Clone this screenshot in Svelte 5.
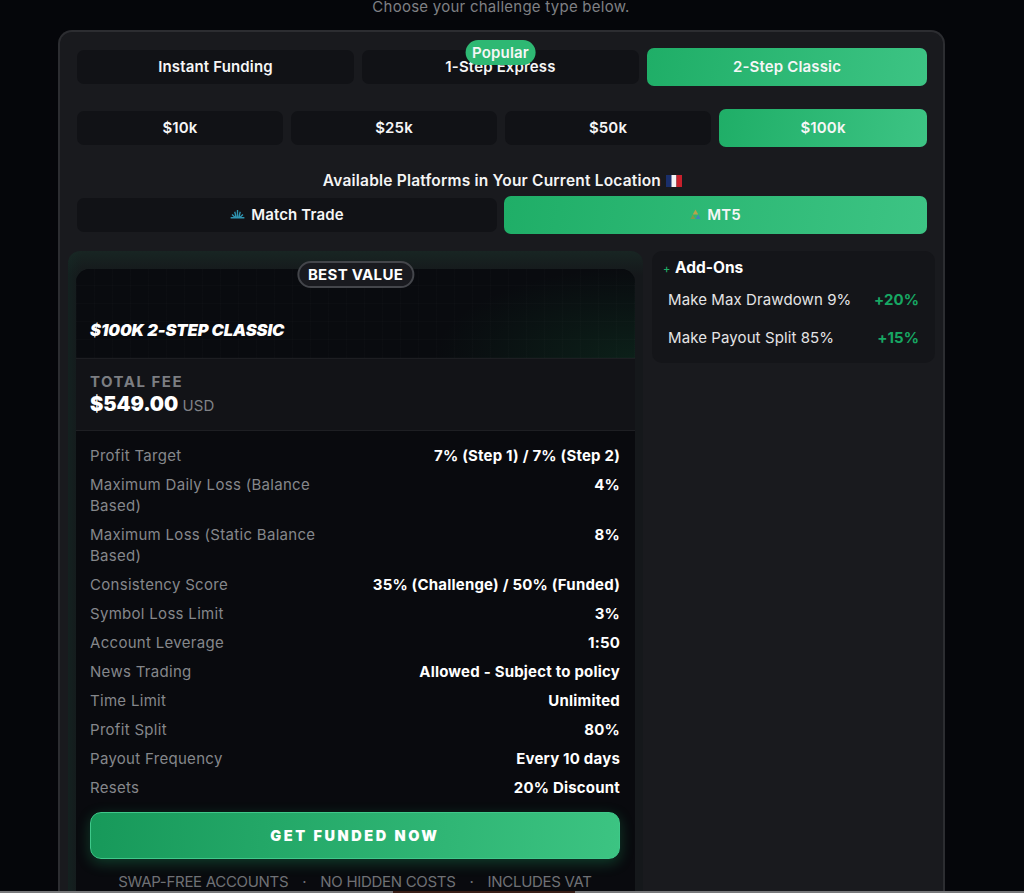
<script>
  let challenges = [
    { label: 'Instant Funding' },
    { label: '1-Step Express', popular: true },
    { label: '2-Step Classic', active: true }
  ];
  let sizes = [
    { label: '$10k' },
    { label: '$25k' },
    { label: '$50k' },
    { label: '$100k', active: true }
  ];
  let rules = [
    ['Profit Target', '7% (Step 1) / 7% (Step 2)'],
    ['Maximum Daily Loss (Balance Based)', '4%'],
    ['Maximum Loss (Static Balance Based)', '8%'],
    ['Consistency Score', '35% (Challenge) / 50% (Funded)'],
    ['Symbol Loss Limit', '3%'],
    ['Account Leverage', '1:50'],
    ['News Trading', 'Allowed - Subject to policy'],
    ['Time Limit', 'Unlimited'],
    ['Profit Split', '80%'],
    ['Payout Frequency', 'Every 10 days'],
    ['Resets', '20% Discount']
  ];
  let addons = [
    ['Make Max Drawdown 9%', '+20%'],
    ['Make Payout Split 85%', '+15%']
  ];
</script>

<div class="page">
  <div class="content">
    <p class="intro">Choose your challenge type below.</p>

    <section class="panel">
      <div class="row three">
        {#each challenges as c}
          <button class="opt" class:active={c.active}>
            {#if c.popular}<span class="popular">Popular</span>{/if}
            {c.label}
          </button>
        {/each}
      </div>

      <div class="row four">
        {#each sizes as s}
          <button class="opt" class:active={s.active}>{s.label}</button>
        {/each}
      </div>

      <div class="platforms">
        <h3>Available Platforms in Your Current Location
          <svg class="flag" viewBox="0 0 16 12" width="16" height="12">
            <rect width="6" height="12" fill="#1a2f6b" />
            <rect x="5.5" width="5" height="12" fill="#f3f3f5" />
            <rect x="10.5" width="5.500" height="12" fill="#c8202c" />
          </svg>
        </h3>
        <div class="row two">
          <button class="opt">
            <svg class="logo" viewBox="0 0 16 12" width="15" height="11">
              <path d="M8 1v8M5 3l1.500 6M11 3L9.500 9M2 6l4 3.500M14 6l-4 3.500M0.500 9.500h15" stroke="#2f93b0" stroke-width="1.500" fill="none" />
            </svg>
            Match Trade
          </button>
          <button class="opt active">
            <svg class="logo" viewBox="0 0 12 12" width="11" height="11">
              <path d="M6 0.500 9 6H3z" fill="#b9a24a" />
              <path d="M3 6 0.500 11H6z" fill="#7f9a4c" />
              <path d="M9 6l2.500 5H6z" fill="#3f86b8" />
            </svg>
            MT5
          </button>
        </div>
      </div>

      <div class="columns">
        <div class="left">
          <article class="card">
            <span class="best">BEST VALUE</span>
            <header class="card-head">
              <h2>$100K 2-STEP CLASSIC</h2>
            </header>
            <div class="fee">
              <div class="fee-label">TOTAL FEE</div>
              <div class="fee-price"><strong>$549.00</strong> <span>USD</span></div>
            </div>
            <div class="rules">
              {#each rules as [name, value]}
                <div class="rule">
                  <span class="rule-name">{name}</span>
                  <span class="rule-value">{value}</span>
                </div>
              {/each}
              <button class="cta">GET FUNDED NOW</button>
              <div class="perks">
                <span>SWAP-FREE ACCOUNTS</span><i>·</i><span>NO HIDDEN COSTS</span><i>·</i><span>INCLUDES VAT</span>
              </div>
            </div>
          </article>
        </div>

        <aside class="addons">
          <h4><span class="plus">+</span> Add-Ons</h4>
          {#each addons as [name, price]}
            <div class="addon">
              <span>{name}</span>
              <b>{price}</b>
            </div>
          {/each}
        </aside>
      </div>
    </section>
  </div>
  <div class="strip"><span></span></div>
</div>

<style>
  :global(body) {
    margin: 0;
    background: #05060a;
  }

  .page {
    height: 893px;
    overflow: hidden;
    font-family: Inter, "Liberation Sans", sans-serif;
    color: #fff;
  }

  .content {
    height: 891px;
    width: 1002px;
    overflow: hidden;
  }

  .strip {
    height: 2px;
    background: #77787a;
    padding-left: 393px;
  }

  .strip span {
    display: block;
    width: 182px;
    height: 2px;
    background: #3a1f18;
  }

  .intro {
    margin: 0;
    height: 30px;
    text-align: center;
    font-size: 15px;
    line-height: 14px;
    letter-spacing: 0.25px;
    color: #7f8084;
  }

  .panel {
    box-sizing: border-box;
    width: 887px;
    height: 900px;
    margin-left: 58px;
    padding: 16px 15px 0 17px;
    background: #191a1e;
    border: 2px solid #2c2d31;
    border-bottom: 0;
    border-radius: 14px 14px 0 0;
  }

  .row {
    display: grid;
    gap: 8px;
    align-items: center;
  }

  .three {
    grid-template-columns: 277px 277px 280px;
  }

  .four {
    grid-template-columns: repeat(3, 206px) 208px;
    margin-top: 23px;
  }

  .two {
    grid-template-columns: 420px 423px;
    gap: 7px;
  }

  .opt {
    position: relative;
    height: 34px;
    padding: 0 0 2px;
    border: 0;
    border-radius: 7px;
    background: #111216;
    color: #f6f6f6;
    font: 600 15px Inter, "Liberation Sans", sans-serif;
    letter-spacing: 0.15px;
    display: flex;
    align-items: center;
    justify-content: center;
    gap: 6px;
  }

  .opt.active {
    height: 38px;
    background: linear-gradient(100deg, #1fae67, #3dc484);
  }

  .popular {
    position: absolute;
    left: 50%;
    top: -10px;
    transform: translateX(-50%);
    padding: 0 7px;
    height: 25px;
    line-height: 25px;
    border-radius: 13px;
    background: #2eb873;
    font-size: 15px;
    font-weight: 600;
  }

  .platforms {
    margin-top: 25px;
  }

  h3 {
    margin: 0 0 7px;
    height: 17px;
    font-size: 15.5px;
    line-height: 17px;
    font-weight: 600;
    letter-spacing: 0.2px;
    text-align: center;
    color: #f4f4f4;
  }

  .flag {
    margin-left: 1px;
    vertical-align: -1px;
  }

  .columns {
    display: flex;
    margin-top: 17px;
    margin-left: -9px;
  }

  .left {
    flex: none;
    box-sizing: border-box;
    width: 575px;
    height: 700px;
    padding: 18px 0 0 8px;
    border-radius: 12px;
    background:
      linear-gradient(180deg, rgba(26, 46, 40, 0.6), transparent 24px),
      linear-gradient(90deg, #142120, #15181b 14px);
  }

  .card {
    position: relative;
    width: 559px;
    height: 700px;
    border-radius: 14px 14px 0 0;
    background: #090a0e;
  }

  .best {
    position: absolute;
    top: -8px;
    left: 50%;
    transform: translateX(-50%);
    padding: 0 9px;
    height: 27px;
    line-height: 23px;
    box-sizing: border-box;
    border: 2px solid #44464b;
    border-radius: 14px;
    background: #191a1f;
    font-size: 15px;
    font-weight: 700;
    letter-spacing: 0.3px;
    white-space: nowrap;
  }

  .card-head {
    box-sizing: border-box;
    height: 90px;
    padding: 50px 15px 0 14px;
    border-bottom: 1px solid #1d1e22;
    background:
      repeating-linear-gradient(90deg, rgba(255, 255, 255, 0.012) 0 1px, transparent 1px 18px),
      repeating-linear-gradient(0deg, rgba(255, 255, 255, 0.012) 0 1px, transparent 1px 18px),
      radial-gradient(ellipse 200px 90px at 100% 100%, #0c2019, transparent),
      #090b0f;
    border-radius: 14px 14px 0 0;
  }

  h2 {
    margin: 0;
    font-size: 16.5px;
    line-height: 22px;
    font-weight: 900;
    font-style: italic;
    letter-spacing: -0.1px;
  }

  .fee {
    box-sizing: border-box;
    height: 72px;
    padding: 14px 14px 0;
    background: #121317;
    border-bottom: 1px solid #1e1f23;
  }

  .fee-label {
    font-size: 15px;
    line-height: 17px;
    font-weight: 700;
    letter-spacing: 1.5px;
    color: #7c7e82;
  }

  .fee-price {
    line-height: 24px;
    margin-top: 2px;
  }

  .fee-price strong {
    font-size: 20px;
    font-weight: 900;
    letter-spacing: -0.1px;
  }

  .fee-price span {
    font-size: 15px;
    color: #808286;
  }

  .rules {
    padding: 14px 15px 0 14px;
  }

  .rule {
    display: flex;
    justify-content: space-between;
    margin-bottom: 8px;
    font-size: 15px;
    line-height: 21px;
  }

  .rule-name {
    width: 240px;
    letter-spacing: 0.3px;
    color: #85878b;
  }

  .rule-value {
    font-weight: 700;
    letter-spacing: 0.2px;
    text-align: right;
  }

  .cta {
    display: block;
    width: 100%;
    height: 47px;
    margin-top: 14px;
    border: 1px solid #3fc98a;
    border-radius: 11px;
    background: linear-gradient(95deg, #17995a, #3cc482);
    box-shadow: 0 4px 14px rgba(32, 180, 110, 0.3);
    color: #fff;
    font: 900 14.5px Inter, "Liberation Sans", sans-serif;
    letter-spacing: 2.6px;
  }

  .perks {
    display: flex;
    justify-content: center;
    gap: 14px;
    margin-top: 14px;
    font-size: 15px;
    line-height: 17px;
    letter-spacing: -0.3px;
    color: #6f7175;
  }

  .perks i {
    font-style: normal;
  }

  .addons {
    flex: none;
    box-sizing: border-box;
    width: 283px;
    height: 112px;
    margin-left: 9px;
    padding: 7px 16px 0 11px;
    border-radius: 10px;
    background: #141519;
  }

  h4 {
    margin: 0 0 10px;
    font-size: 15.5px;
    line-height: 20px;
    font-weight: 700;
  }

  .plus {
    color: #1fae67;
    font-size: 11px;
    font-weight: 500;
    margin-right: 1px;
  }

  .addon {
    display: flex;
    justify-content: space-between;
    padding: 0 0 0 5px;
    height: 38px;
    line-height: 22px;
    font-size: 15px;
    letter-spacing: 0.1px;
    color: #e4e4e6;
  }

  .addon b {
    color: #17a763;
    font-weight: 700;
  }
</style>
